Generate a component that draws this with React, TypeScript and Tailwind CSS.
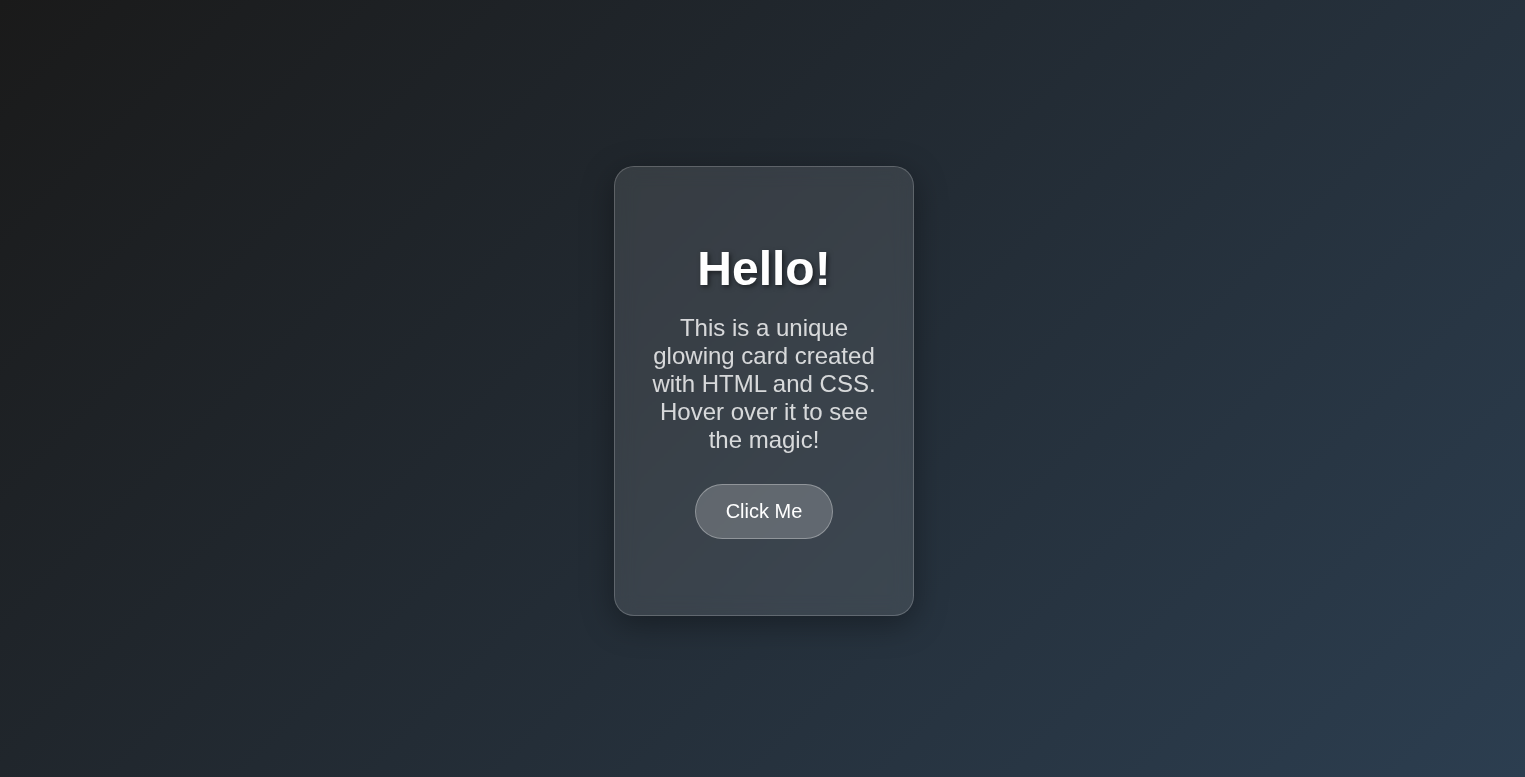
import React from "react";

export default function App() {
  return (
    <div
      className="min-h-screen w-full flex items-center justify-center pl-[3px] pt-[5px] box-border bg-[linear-gradient(135deg,#1a1a1a,#2c3e50)]"
      style={{ fontFamily: '"Liberation Sans", Arial, sans-serif' }}
    >
      <div className="w-[300px] h-[450px] box-border rounded-[20px] border border-white/20 bg-white/10 shadow-[0_8px_32px_rgba(0,0,0,0.35)] backdrop-blur-[10px] flex flex-col items-center justify-center px-[30px] pb-[2px] text-center">
        <h1 className="m-0 text-[48px] leading-[normal] font-bold text-white [text-shadow:2px_2px_5px_rgba(0,0,0,0.5)] mb-[18px]">
          Hello!
        </h1>
        <p className="m-0 text-[24px] leading-[normal] text-white/80 mb-[30px]">
          This is a unique glowing card created with HTML and CSS. Hover over it to see the magic!
        </p>
        <button className="px-[30px] py-[15px] text-[20px] leading-[normal] text-white bg-white/20 border border-white/30 rounded-full cursor-pointer">
          Click Me
        </button>
      </div>
    </div>
  );
}
